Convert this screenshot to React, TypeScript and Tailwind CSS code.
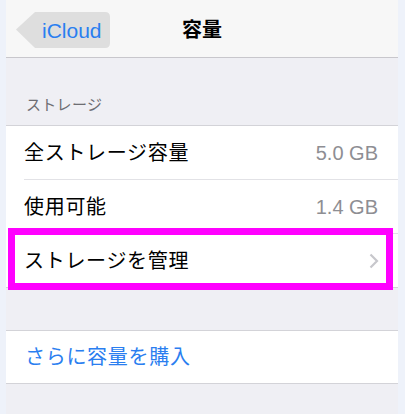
import React from "react";

const jp = { fontFamily: '"Liberation Sans", "Noto Sans CJK JP", sans-serif' };

function Row({ label, value, chevron }: { label: string; value?: string; chevron?: boolean }) {
  return (
    <div className="flex h-[53px] items-center justify-between pl-[18px] pr-[20px] bg-white">
      <span className="text-[20px] text-black leading-none tracking-[0.7px]">{label}</span>
      {value && <span className="text-[20px] text-[#8e8e93] leading-none">{value}</span>}
      {chevron && (
        <svg width="10" height="16" viewBox="0 0 10 16" className="mr-[-1px]">
          <path d="M1.5 1.5 L8 8 L1.5 14.5" fill="none" stroke="#c7c7cc" strokeWidth="2.2" />
        </svg>
      )}
    </div>
  );
}

export default function App() {
  return (
    <div className="w-full h-[414px] bg-[#eef2fa] overflow-hidden" style={jp}>
      <div className="ml-[6px] w-[392px] h-full bg-[#efeff4]">
        <div className="grid grid-cols-[1fr_auto_1fr] items-center h-[57px] bg-[#f7f7f7] border-b border-[#c8c7cc] box-content">
          <div className="pl-[10px] flex items-center">
            <div className="relative w-[94px] h-[36px] mt-[3px] flex items-center">
              <svg className="absolute inset-0" width="94" height="36" viewBox="0 0 94 36">
                <path d="M0 17.5 L19 0 H89 Q94 0 94 5 V31 Q94 36 89 36 H19 Z" fill="#dedede" />
              </svg>
              <span className="relative pl-[26px] text-[21px] text-[#2a7ef0] leading-none">iCloud</span>
            </div>
          </div>
          <div className="text-[20px] font-bold text-black leading-none mt-[3px]">容量</div>
          <div />
        </div>

        <div className="h-[67px] flex items-end pl-[20px] pb-[13px]">
          <span className="text-[15px] text-[#6d6d72] leading-none tracking-[0.3px]">ストレージ</span>
        </div>

        <div className="border-t border-b border-[#d3d3d8] bg-white">
          <Row label="全ストレージ容量" value="5.0 GB" />
          <div className="ml-[18px] h-px bg-[#e2e2e6]" />
          <Row label="使用可能" value="1.4 GB" />
          <div className="ml-[18px] h-px bg-[#e2e2e6]" />
          <div className="relative">
            <Row label="ストレージを管理" chevron />
            <div className="absolute left-[2px] top-[-6px] w-[385px] h-[62px] border-[7px] border-[#ff00ff]" />
          </div>
        </div>

        <div className="h-[42px]" />

        <div className="border-t border-b border-[#d3d3d8] bg-white">
          <div className="flex h-[52px] items-center pl-[19px]">
            <span className="text-[20px] text-[#2a7ef0] leading-none tracking-[0.7px]">さらに容量を購入</span>
          </div>
        </div>
      </div>
    </div>
  );
}
